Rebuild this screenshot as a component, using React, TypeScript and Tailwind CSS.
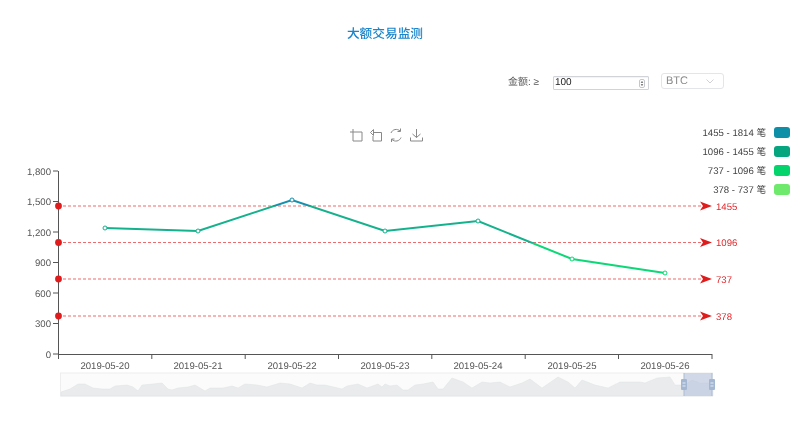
const FONT = '"Liberation Sans", "Noto Sans CJK SC", sans-serif';

const dates = ['2019-05-20', '2019-05-21', '2019-05-22', '2019-05-23', '2019-05-24', '2019-05-25', '2019-05-26'];
const xTicks = [58.5, 151.8, 245.2, 338.5, 431.8, 525.2, 618.5, 712];
const yTicks = [
  { label: '1,800', y: 171 },
  { label: '1,500', y: 201.5 },
  { label: '1,200', y: 232 },
  { label: '900', y: 262.5 },
  { label: '600', y: 293 },
  { label: '300', y: 323.5 },
  { label: '0', y: 354 },
];
const points = [
  [105, 228],
  [198, 231],
  [292, 200],
  [385, 231],
  [478, 221],
  [572, 259],
  [665, 273],
];
const marks = [
  { label: '1455', y: 206 },
  { label: '1096', y: 242.5 },
  { label: '737', y: 279 },
  { label: '378', y: 316 },
];
const legend = [
  { label: '1455 - 1814 笔', y: 127, color: '#0d8fa8' },
  { label: '1096 - 1455 笔', y: 146, color: '#06a47f' },
  { label: '737 - 1096 笔', y: 165, color: '#05d46d' },
  { label: '378 - 737 笔', y: 184, color: '#6ee96b' },
];
const shadow =
  '61,392 70,389 78,384 85,384 93,388 102,389 110,389 115,386 127,385 133,387 138,391 142,385 153,384 162,383 168,389 172,390 178,388 188,387 195,385 205,391 210,388 223,388 232,386 238,388 245,384 257,385 267,387 280,383 290,384 302,388 310,383 317,385 325,385 342,389 347,386 358,384 367,388 378,384 382,387 385,384 390,386 397,385 403,390 408,390 415,385 423,384 433,382 438,389 443,389 452,378 463,382 472,388 482,382 490,383 500,382 510,387 522,383 530,379 542,388 558,377 568,382 575,388 582,380 595,385 608,388 620,382 640,382 645,383 657,378 670,377 675,385 685,385 692,380 700,383 708,383 713,385';

function Chart() {
  return (
    <svg
      className="block"
      width={800}
      height={302}
      viewBox="0 120 800 302"
      style={{ fontFamily: FONT }}
      textRendering="geometricPrecision"
    >
      <defs>
        <linearGradient id="lineColor" gradientUnits="userSpaceOnUse" x1="0" y1="171" x2="0" y2="354">
          <stop offset="0.191" stopColor="#1390ad" />
          <stop offset="0.191" stopColor="#14b18d" />
          <stop offset="0.391" stopColor="#14b18d" />
          <stop offset="0.391" stopColor="#0cd877" />
          <stop offset="1" stopColor="#0cd877" />
        </linearGradient>
      </defs>

      {/* toolbox */}
      <g fill="none" stroke="#888" strokeWidth="1">
        <path d="M353 129v12h9v-9h-12" />
        <path d="M373 132.500h8.500v8.500h-8.500v-5" />
        <path d="M373.500 129.500l-3 3 3 3z" />
        <path d="M391 133a5.500 5.500 0 0 1 9-2M401 137.500a5.500 5.500 0 0 1-9 2" />
        <path d="M400.500 128.500v3h-3M391.500 142v-3h3" />
        <path d="M416.500 129v8.500M412.500 134l4 3.500 4-3.500M410.500 137.500v3.500h12v-3.500" />
      </g>

      {/* legend */}
      {legend.map((item) => (
        <g key={item.label}>
          <text x={766} y={item.y + 9} textAnchor="end" fontSize={9.6} fill="#444">
            {item.label}
          </text>
          <rect x={774} y={item.y} width={16} height={11} rx={3} fill={item.color} />
        </g>
      ))}

      {/* axes */}
      <g stroke="#555" strokeWidth="1" fill="none">
        <path d="M58.500 171v183.500H712" />
        {yTicks.map((t) => (
          <path key={t.label} d={`M53 ${t.y}h5`} />
        ))}
        {xTicks.map((x) => (
          <path key={x} d={`M${x} 354v5`} />
        ))}
      </g>
      {yTicks.map((t) => (
        <text key={t.label} x={51} y={t.y + 3.5} textAnchor="end" fontSize={9.6} fill="#555">
          {t.label}
        </text>
      ))}
      {dates.map((d, i) => (
        <text key={d} x={points[i][0]} y={368.5} textAnchor="middle" fontSize={9.6} fill="#555">
          {d}
        </text>
      ))}

      {/* threshold lines */}
      {marks.map((m) => (
        <g key={m.label}>
          <line x1={58} y1={m.y} x2={702} y2={m.y} stroke="#ee6b6d" strokeWidth="1.2" strokeDasharray="3 2" />
          <circle cx={58.5} cy={m.y} r={3.4} fill="#e01b1b" />
          <path d={`M700 ${m.y - 4.5}L712 ${m.y}L700 ${m.y + 4.5}L703 ${m.y}Z`} fill="#e01b1b" />
          <text x={716} y={m.y + 3.5} fontSize={9.6} fill="#e0282c">
            {m.label}
          </text>
        </g>
      ))}

      {/* series */}
      <polyline
        points={points.map((p) => p.join(',')).join(' ')}
        fill="none"
        stroke="url(#lineColor)"
        strokeWidth="2"
      />
      {points.map((p, i) => (
        <circle
          key={i}
          cx={p[0]}
          cy={p[1]}
          r={2}
          fill="#fff"
          stroke={i === 2 ? '#1390ad' : i > 4 ? '#0cd877' : '#14b18d'}
          strokeWidth="1"
        />
      ))}

      {/* data zoom */}
      <rect x={60.5} y={373} width={652} height={23} fill="#fbfbfb" stroke="#eeeeee" />
      <polygon points={`61,396 ${shadow} 713,396`} fill="#e9ebec" stroke="#dfe2e4" strokeWidth="0.5" />
      <rect x={684} y={373} width={28} height={23} fill="#b5c3dd" fillOpacity="0.6" />
      <path d="M684 373v23M712 373v23" stroke="#a9bbd6" strokeWidth="1" />
      {[684, 712].map((x) => (
        <g key={x}>
          <rect x={x - 3} y={379} width={6} height={11} rx={1} fill="#a3b7d3" />
          <path d={`M${x - 1.5} 383h3M${x - 1.5} 386h3`} stroke="#e6ecf4" strokeWidth="1" />
        </g>
      ))}
    </svg>
  );
}

export default function App() {
  return (
    <div
      className="w-[800px] h-[422px] overflow-hidden bg-white flex flex-col blur-[0.35px]"
      style={{ fontFamily: FONT, textRendering: 'geometricPrecision' }}
    >
      <div className="h-[73px] w-[770px] pt-[26px] text-center text-[12.7px] leading-4 font-medium text-[#1a85cb]">
        大额交易监测
      </div>

      <div className="h-[47px] flex items-start">
        <span className="ml-[508px] w-[45px] mt-[3px] text-[10px] leading-[13px] text-[#555]">金额: ≥</span>
        <div className="mt-[3px] w-[96px] h-[14px] border border-[#d0d3d7] rounded-[1px] flex items-center justify-between pl-px pr-[3px] shadow-[inset_0_1px_1px_rgba(0,0,0,0.05)]">
          <span className="text-[10px] leading-none text-[#222]">100</span>
          <svg width="6" height="9" viewBox="0 0 6 9">
            <rect x="0.5" y="0.5" width="5" height="8" rx="1.5" fill="#fff" stroke="#c4c7cc" />
            <path d="M3 2l1.3 1.7H1.7zM3 7L1.700 5.300h2.600z" fill="#555" />
          </svg>
        </div>
        <div className="ml-[12px] w-[63px] h-[16px] border border-[#e3e5e8] rounded-[3px] flex items-center justify-between pl-[4px] pr-[9px]">
          <span className="text-[11px] leading-none text-[#8a8a8a]">BTC</span>
          <svg width="8" height="5" viewBox="0 0 8 5" fill="none" stroke="#c9ccd1" strokeWidth="0.9">
            <path d="M0.500 0.500L4 4l3.500-3.500" />
          </svg>
        </div>
      </div>

      <Chart />
    </div>
  );
}
